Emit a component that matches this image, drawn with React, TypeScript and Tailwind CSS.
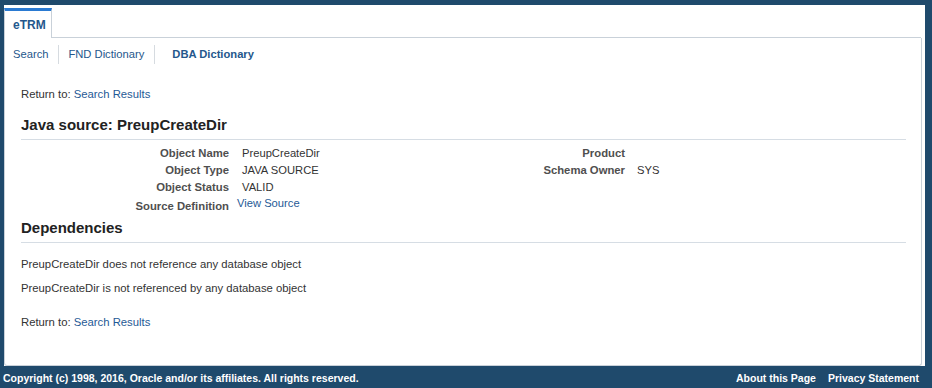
import React from "react";

const font = { fontFamily: '"Liberation Sans", Arial, sans-serif' };

function Field({ label, value }: { label: string; value?: string }) {
  return (
    <div className="flex items-center h-[17px]">
      <div className="w-[208px] text-right font-bold text-[11.3px] text-[#4f4f4f]">{label}</div>
      <div className="ml-[13px] text-[11.2px] text-[#333]">{value}</div>
    </div>
  );
}

function ReturnTo({ className }: { className: string }) {
  return (
    <div className={className + " text-[11.3px] leading-[14px] text-[#333]"}>
      Return to: <span className="text-[#1f5a96]">Search Results</span>
    </div>
  );
}

export default function App() {
  return (
    <div className="w-[932px] h-[388px] bg-[#1f4a6c] flex flex-col" style={font}>
      <div className="ml-[4px] mt-[5px] w-[921px] h-[361px] bg-white flex flex-col">
        {/* tab strip */}
        <div className="flex h-[30px] mt-[3px]">
          <div className="w-[48px] border-t-[3px] border-t-[#2a7ad2] border-l border-r border-[#c9d1d9] flex items-center pl-[8px] text-[12px] font-bold text-[#24578c]">
            eTRM
          </div>
          <div className="flex-1 border-b border-[#c9d1d9] mr-[4px]" />
        </div>

        {/* panel */}
        <div className="flex-1 border-l border-r border-b border-[#c9d1d9] rounded-b-[3px] mr-[3px] flex flex-col">
          <div className="flex items-center h-[30px] mt-[1px] text-[11.2px] text-[#24578c]">
            <span className="pl-[8px] pr-[10px]">Search</span>
            <span className="w-px h-[19px] bg-[#d6dbe0]" />
            <span className="pl-[9px] pr-[10px]">FND Dictionary</span>
            <span className="w-px h-[19px] bg-[#d6dbe0]" />
            <span className="pl-[17px] font-bold">DBA Dictionary</span>
          </div>

          <div className="pl-[16px] pr-[15px] flex flex-col">
            <ReturnTo className="mt-[18px]" />

            <div className="mt-[15px] text-[15px] leading-[18px] font-bold text-[#222] pb-[5px] border-b border-[#d6dde4]">
              Java source: PreupCreateDir
            </div>

            <div className="flex mt-[5px]">
              <div className="flex flex-col w-[400px]">
                <Field label="Object Name" value="PreupCreateDir" />
                <Field label="Object Type" value="JAVA SOURCE" />
                <Field label="Object Status" value="VALID" />
                <div className="flex h-[19px] items-end">
                  <div className="w-[208px] text-right font-bold text-[11.3px] text-[#4f4f4f]">Source Definition</div>
                  <div className="ml-[8px] mb-[3px] text-[11.2px] text-[#1f5a96]">View Source</div>
                </div>
              </div>
              <div className="flex flex-col">
                <div className="flex items-center h-[17px]">
                  <div className="w-[204px] text-right font-bold text-[11.3px] text-[#4f4f4f]">Product</div>
                </div>
                <div className="flex items-center h-[17px]">
                  <div className="w-[204px] text-right font-bold text-[11.3px] text-[#4f4f4f]">Schema Owner</div>
                  <div className="ml-[12px] text-[11.2px] text-[#333]">SYS</div>
                </div>
              </div>
            </div>

            <div className="mt-[4px] text-[15px] leading-[18px] font-bold text-[#222] pb-[5px] border-b border-[#d6dde4]">
              Dependencies
            </div>

            <div className="mt-[14px] text-[11.3px] leading-[14px] text-[#333]">PreupCreateDir does not reference any database object</div>
            <div className="mt-[10px] text-[11.3px] leading-[14px] text-[#333]">PreupCreateDir is not referenced by any database object</div>

            <ReturnTo className="mt-[20px]" />
          </div>
        </div>
      </div>

      <div className="flex-1 flex items-center pt-[3px] px-[3px] text-[10.5px] font-bold text-white">
        <span>Copyright (c) 1998, 2016, Oracle and/or its affiliates. All rights reserved.</span>
        <span className="ml-auto">About this Page</span>
        <span className="ml-[12px] mr-[10px]">Privacy Statement</span>
      </div>
    </div>
  );
}
